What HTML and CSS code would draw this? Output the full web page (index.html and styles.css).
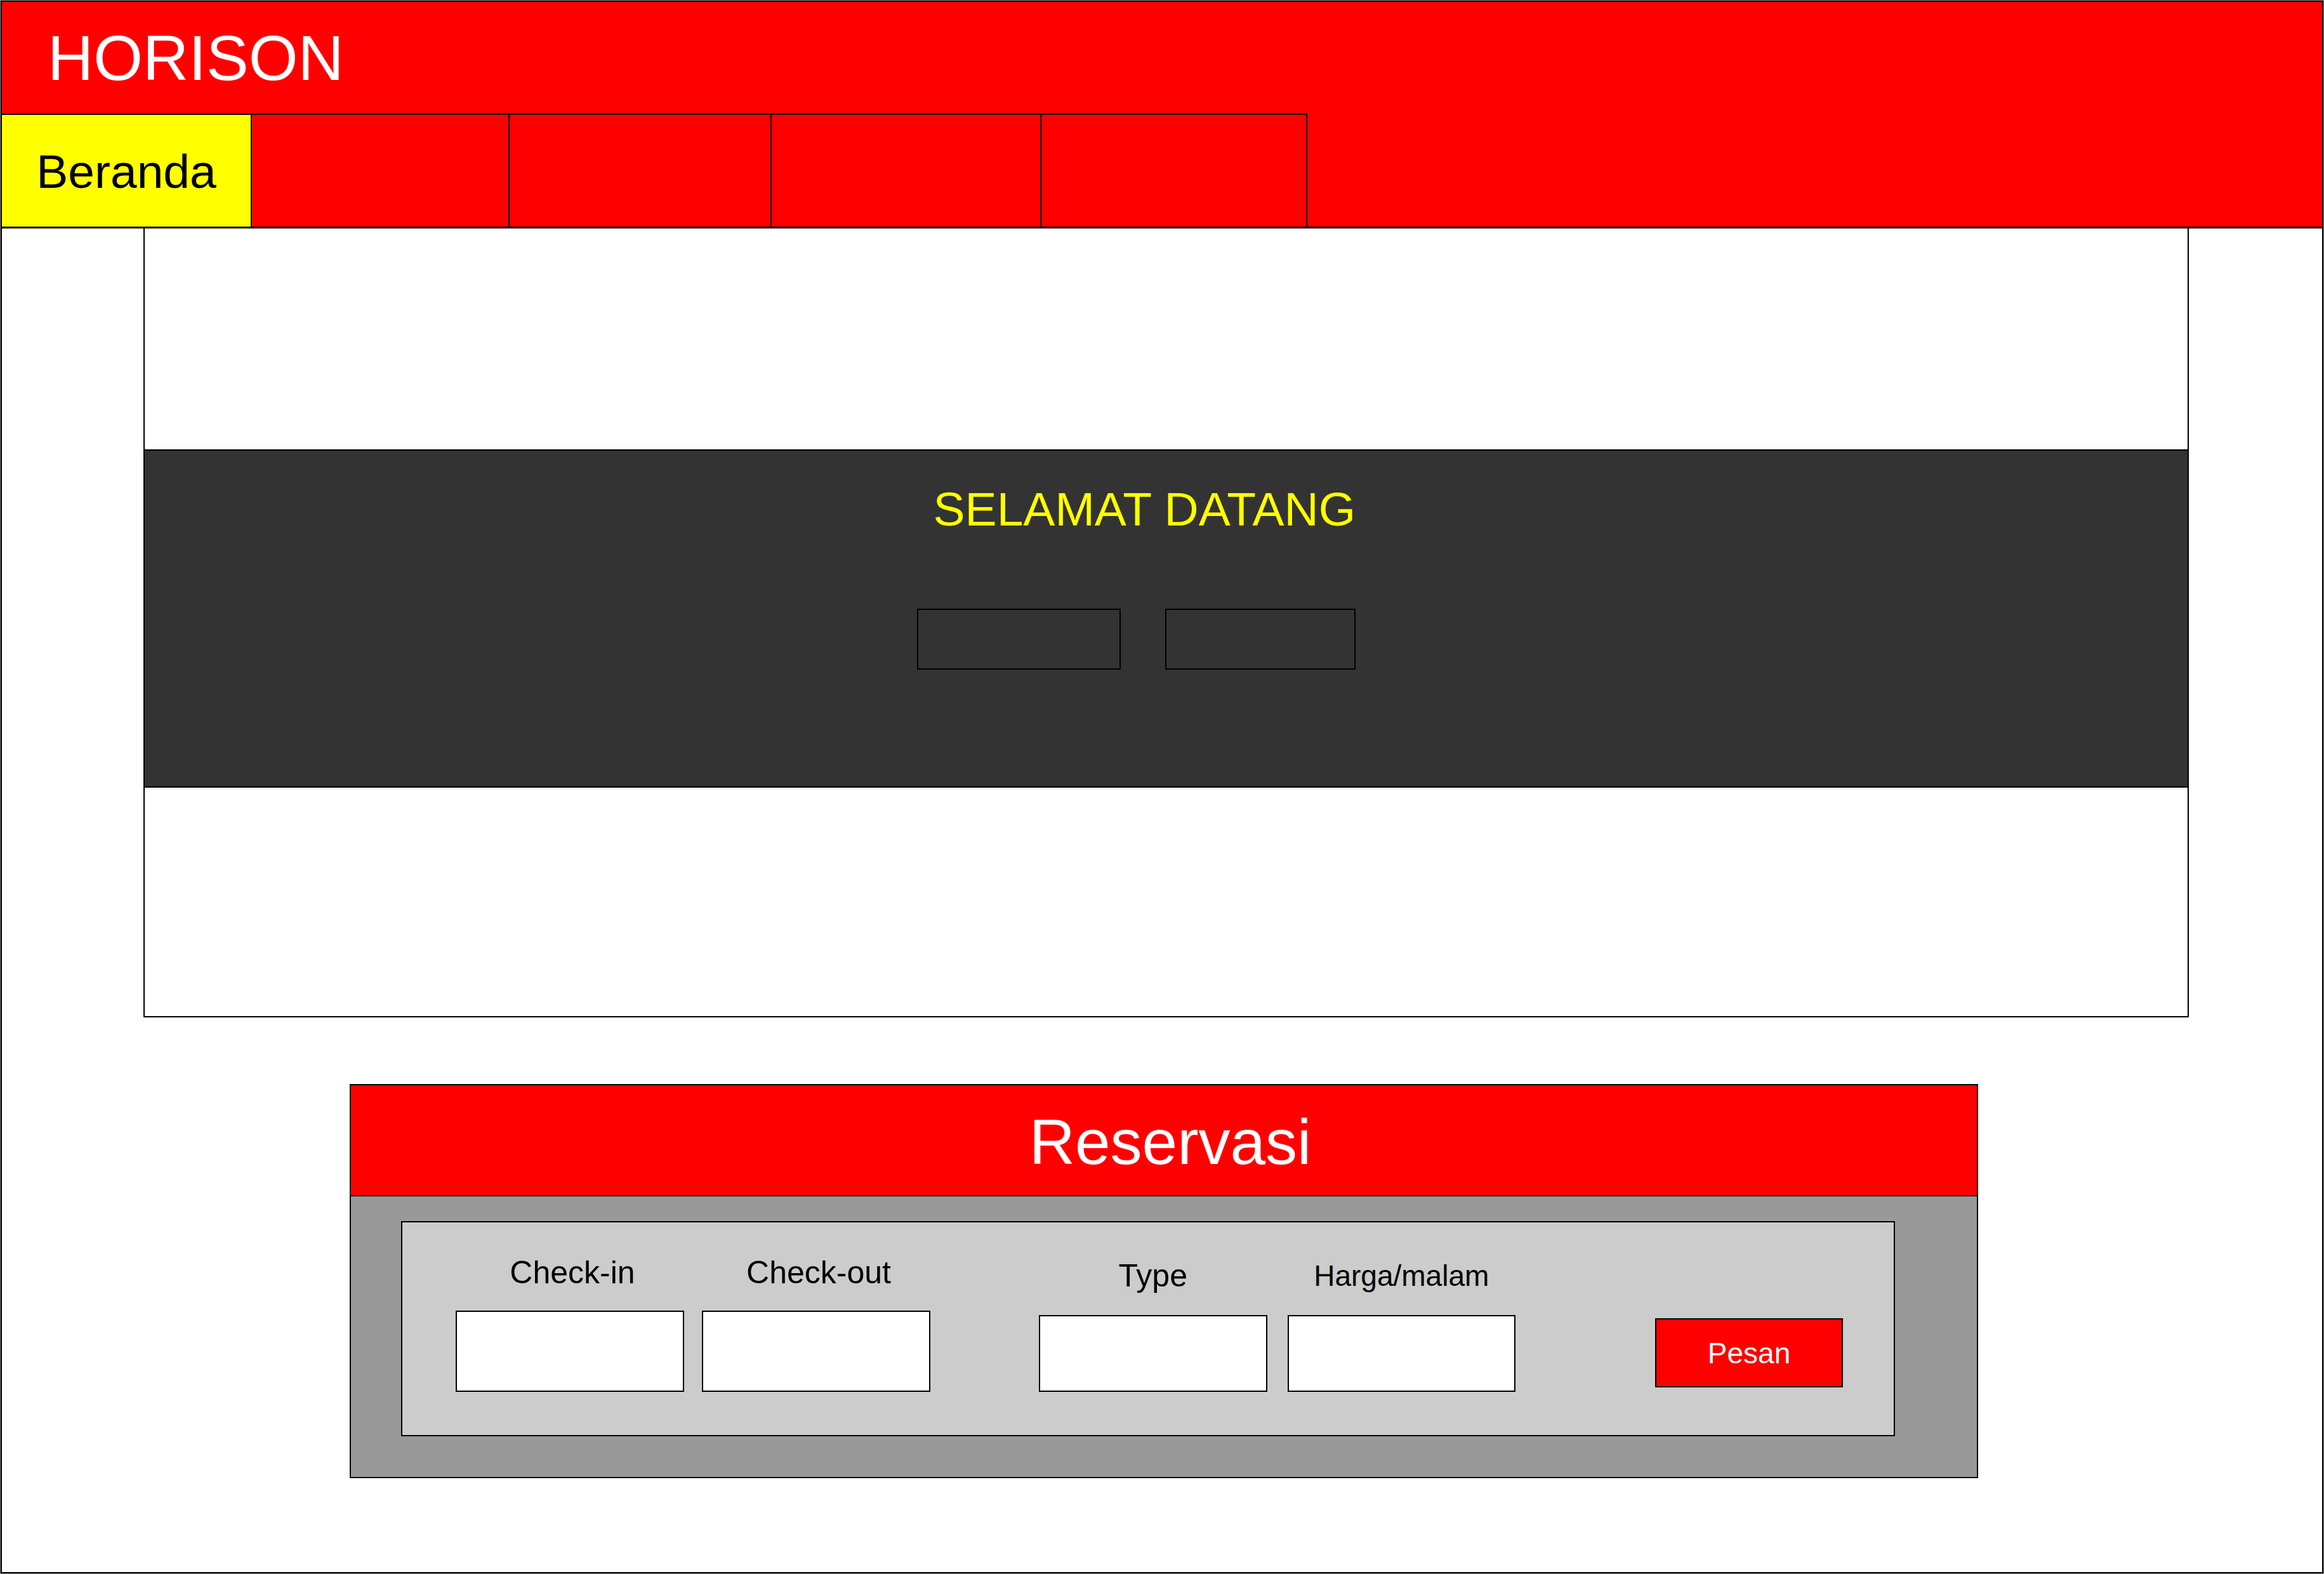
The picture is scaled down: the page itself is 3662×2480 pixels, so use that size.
FILE: index.html
```html
<!DOCTYPE html>
<html lang="id">
<head>
  <meta charset="utf-8">
  <meta name="viewport" content="width=device-width, initial-scale=1">
  <title>HORISON</title>
  <link rel="stylesheet" href="styles.css">
</head>
<body>
  <div class="page">
    <header class="header">
      <h1 class="brand">HORISON</h1>
      <nav class="tabs" aria-label="Menu">
        <a class="tab tab-home" href="#" aria-current="page">Beranda</a>
        <a class="tab tab-two" href="#" aria-label="Menu 2"></a>
        <a class="tab tab-three" href="#" aria-label="Menu 3"></a>
        <a class="tab tab-four" href="#" aria-label="Menu 4"></a>
        <a class="tab tab-five" href="#" aria-label="Menu 5"></a>
      </nav>
    </header>

    <main>
      <section class="hero">
        <div class="banner">
          <div class="welcome">
            <h2 class="welcome-title">SELAMAT DATANG</h2>
            <div class="welcome-actions">
              <button class="ghost ghost-wide" type="button" aria-label="Aksi 1"></button>
              <button class="ghost" type="button" aria-label="Aksi 2"></button>
            </div>
          </div>
        </div>
      </section>

      <section class="booking">
        <h2 class="booking-title">Reservasi</h2>
        <div class="booking-body">
          <form class="form">
            <div class="group dates">
              <div class="field">
                <label class="label" for="check-in">Check-in</label>
                <input class="control" id="check-in" type="text">
              </div>
              <div class="field">
                <label class="label" for="check-out">Check-out</label>
                <input class="control" id="check-out" type="text">
              </div>
            </div>
            <div class="group room">
              <div class="field">
                <label class="label" for="type">Type</label>
                <select class="control" id="type"><option value=""></option></select>
              </div>
              <div class="field">
                <label class="label label-small" for="price">Harga/malam</label>
                <input class="control" id="price" type="text">
              </div>
            </div>
            <button class="submit" type="submit">Pesan</button>
          </form>
        </div>
      </section>
    </main>
  </div>
</body>
</html>
```

FILE: styles.css
```css
* {
  box-sizing: border-box;
}

body {
  display: flex;
  min-height: 100vh;
  margin: 0;
  border: 1px solid #888;
  background: #fff;
  color: #000;
  font-family: "Liberation Sans", Arial, sans-serif;
}

h1,
h2 {
  margin: 0;
  font-weight: 400;
}

button,
input,
select {
  margin: 0;
  padding: 0;
  border: 2px solid #000;
  border-radius: 0;
  font: inherit;
}

.page {
  flex: 1;
  min-width: 0;
  border: 2px solid #000;
}

/* Header */

.header {
  border-bottom: 3px solid #000;
  background: #f00;
}

.brand {
  padding: 32px 72px;
  color: #fff;
  font-size: 100px;
  line-height: 112px;
}

.tabs {
  display: flex;
}

.tab {
  flex: 0 1 auto;
  height: 178px;
  border-top: 2px solid #000;
  border-right: 2px solid #000;
  color: #000;
  font-size: 75px;
  line-height: 178px;
  text-align: center;
  text-decoration: none;
}

.tab-home {
  width: 394px;
  background: #ff0;
}

.tab-two {
  width: 406px;
}

.tab-three {
  width: 413px;
}

.tab-four {
  width: 425px;
}

.tab-five {
  width: 419px;
}

/* Hero */

.hero {
  margin: 0 210px 0 223px;
  padding: 348px 0 360px;
  border: 2px solid #000;
  border-top: 0;
}

.banner {
  display: flex;
  justify-content: center;
  padding: 48px 94px 184px 0;
  border-top: 2px solid #000;
  border-bottom: 2px solid #000;
  background: #333;
}

.welcome-title {
  color: #ff0;
  font-size: 75px;
  line-height: 88px;
  text-align: right;
}

.welcome-actions {
  display: flex;
  gap: 70px;
  margin-top: 113px;
}

.ghost {
  width: 300px;
  height: 96px;
  background: transparent;
}

.ghost-wide {
  width: 321px;
}

/* Booking */

.booking {
  margin: 105px 542px 0 548px;
  border: 2px solid #000;
  background: #999;
}

.booking-title {
  padding: 33px 0 28px 20px;
  border-bottom: 2px solid #000;
  background: #f00;
  color: #fff;
  font-size: 100px;
  line-height: 112px;
  text-align: center;
}

.booking-body {
  padding: 39px 129px 64px 79px;
}

.form {
  display: grid;
  grid-template-columns: 748fr 751fr 345fr;
  column-gap: 171px;
  align-items: end;
  padding: 49px 80px 68px 84px;
  border: 2px solid #000;
  background: #ccc;
}

.group {
  display: grid;
  grid-template-columns: 1fr 1fr;
}

.dates {
  column-gap: 28px;
}

.room {
  column-gap: 32px;
}

.field {
  display: grid;
  row-gap: 30px;
}

.room .field {
  row-gap: 32px;
}

.label {
  font-size: 50px;
  line-height: 60px;
  text-align: center;
}

.dates .label {
  padding-left: 8px;
}

.label-small {
  font-size: 46px;
}

.control {
  width: 100%;
  height: 128px;
  padding: 0 24px;
  background: #fff;
  font-size: 46px;
  appearance: none;
}

.room .control {
  height: 121px;
}

.submit {
  justify-self: end;
  width: 296px;
  height: 109px;
  margin-bottom: 7px;
  background: #f00;
  color: #fff;
  font-size: 46px;
}
```
